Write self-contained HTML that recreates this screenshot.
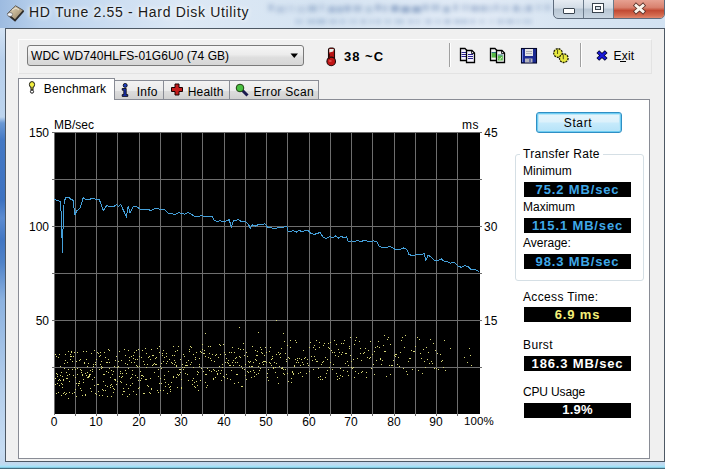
<!DOCTYPE html>
<html><head><meta charset="utf-8">
<style>
*{margin:0;padding:0;box-sizing:border-box}
html,body{width:720px;height:469px;overflow:hidden;background:#fff}
body{position:relative;font-family:"Liberation Sans",sans-serif;font-size:12px;color:#000}
.a{position:absolute}
.t{position:absolute;white-space:pre;line-height:1}
#frame{left:0;top:0;width:665px;height:469px;
 background:linear-gradient(180deg,#b4cde9 0px,#c9dcf0 20px,#d2e2f3 28px,#b8d0ec 60px,#bcd4ee 117px,#6a98d4 123px,#4378c4 140px,#3d72c1 200px,#5b8bd0 218px,#4176c3 240px,#4f82c8 262px,#8cb2e0 300px,#b5cfec 390px,#c6dcf2 450px,#c4d8ee 462px,#bcdcf1 465px,#a2e2f7 466.5px,#86c8e0 467.5px,#24404f 469px)}
#glass{left:0;top:0;width:665px;height:28px;
 background:linear-gradient(90deg,#9dbbe0 0px,#bad2ed 40px,#dce8f5 180px,#d6e4f2 320px,#e2ebf6 480px,#d8e5f2 560px,#d2e2f2 666px)}
#client{left:5px;top:28px;width:660px;height:434px;border:1px solid #4d5864;background:#f0f0f0}
#tb{left:18px;top:39px;width:634px;height:35px;border:1px solid #fdfdfd;border-right-color:#e3e3e3;border-bottom-color:#e3e3e3;background:#f0f0f0}
#combo{left:27px;top:45px;width:277px;height:21px;border:1px solid #7a7a7a;border-radius:3px;
 background:linear-gradient(180deg,#f6f6f6 0%,#ececec 45%,#dedede 60%,#d6d6d6 100%)}
.sep{width:2px;border-left:1px solid #a0a0a0;border-right:1px solid #fff}
.tab{top:80px;height:20px;border:1px solid #898c95;border-bottom:none;background:linear-gradient(180deg,#f2f2f2 0%,#ebebeb 50%,#dddddd 51%,#cfcfcf 100%)}
#page{left:18px;top:99px;width:632px;height:360px;border:1px solid #898c95;background:#fff}
.vb{left:524px;width:107px;height:15px;background:#000}
.vt{position:absolute;left:524px;width:107px;text-align:center;white-space:pre;line-height:1;font-weight:bold;font-size:13px;letter-spacing:0.85px}
.lbl{font-size:12px}
</style></head><body>
<div id="frame" class="a"></div>
<div id="glass" class="a"></div>
<svg class="a" style="left:0;top:0;filter:blur(2px)" width="665" height="28"><rect x="268" y="4" width="6" height="7" fill="#40649a" opacity="0.23"/><rect x="276" y="6" width="9" height="7" fill="#40649a" opacity="0.20"/><rect x="286" y="5" width="9" height="7" fill="#40649a" opacity="0.10"/><rect x="297" y="6" width="9" height="7" fill="#40649a" opacity="0.15"/><rect x="308" y="5" width="9" height="7" fill="#40649a" opacity="0.28"/><rect x="319" y="4" width="6" height="7" fill="#40649a" opacity="0.15"/><rect x="328" y="6" width="8" height="7" fill="#40649a" opacity="0.30"/><rect x="337" y="6" width="6" height="7" fill="#40649a" opacity="0.30"/><rect x="344" y="5" width="7" height="7" fill="#40649a" opacity="0.30"/><rect x="353" y="5" width="9" height="7" fill="#40649a" opacity="0.26"/><rect x="365" y="6" width="8" height="7" fill="#40649a" opacity="0.19"/><rect x="375" y="4" width="6" height="7" fill="#40649a" opacity="0.29"/><rect x="382" y="5" width="6" height="7" fill="#40649a" opacity="0.21"/><rect x="391" y="5" width="8" height="7" fill="#40649a" opacity="0.42"/><rect x="401" y="6" width="9" height="7" fill="#40649a" opacity="0.42"/><rect x="412" y="6" width="9" height="7" fill="#40649a" opacity="0.42"/><rect x="422" y="4" width="7" height="7" fill="#40649a" opacity="0.25"/><rect x="431" y="4" width="9" height="7" fill="#40649a" opacity="0.25"/><rect x="443" y="6" width="7" height="7" fill="#40649a" opacity="0.31"/><rect x="453" y="4" width="5" height="7" fill="#40649a" opacity="0.26"/><rect x="461" y="4" width="9" height="7" fill="#40649a" opacity="0.16"/><rect x="471" y="5" width="8" height="7" fill="#40649a" opacity="0.29"/><rect x="480" y="5" width="7" height="7" fill="#40649a" opacity="0.28"/><rect x="488" y="5" width="5" height="7" fill="#40649a" opacity="0.16"/><rect x="494" y="4" width="5" height="7" fill="#40649a" opacity="0.23"/><rect x="501" y="5" width="9" height="7" fill="#40649a" opacity="0.17"/><rect x="513" y="5" width="6" height="7" fill="#40649a" opacity="0.32"/><rect x="520" y="6" width="5" height="7" fill="#40649a" opacity="0.12"/><rect x="526" y="5" width="6" height="7" fill="#40649a" opacity="0.31"/><rect x="535" y="4" width="7" height="7" fill="#40649a" opacity="0.13"/><rect x="544" y="4" width="7" height="7" fill="#40649a" opacity="0.18"/><rect x="295" y="19" width="8" height="5" fill="#5074a8" opacity="0.19"/><rect x="307" y="19" width="9" height="5" fill="#5074a8" opacity="0.24"/><rect x="317" y="19" width="9" height="5" fill="#5074a8" opacity="0.29"/><rect x="329" y="19" width="8" height="5" fill="#5074a8" opacity="0.23"/><rect x="339" y="19" width="7" height="5" fill="#5074a8" opacity="0.19"/><rect x="349" y="19" width="9" height="5" fill="#5074a8" opacity="0.16"/><rect x="361" y="19" width="5" height="5" fill="#5074a8" opacity="0.26"/><rect x="369" y="19" width="5" height="5" fill="#5074a8" opacity="0.18"/><rect x="376" y="19" width="5" height="5" fill="#5074a8" opacity="0.23"/><rect x="384" y="19" width="8" height="5" fill="#5074a8" opacity="0.17"/><rect x="395" y="19" width="9" height="5" fill="#5074a8" opacity="0.24"/><rect x="408" y="19" width="5" height="5" fill="#5074a8" opacity="0.22"/><rect x="414" y="19" width="7" height="5" fill="#5074a8" opacity="0.15"/><rect x="425" y="19" width="7" height="5" fill="#5074a8" opacity="0.22"/><rect x="435" y="19" width="6" height="5" fill="#5074a8" opacity="0.17"/><rect x="444" y="19" width="7" height="5" fill="#5074a8" opacity="0.27"/><rect x="454" y="19" width="7" height="5" fill="#5074a8" opacity="0.26"/><rect x="462" y="19" width="5" height="5" fill="#5074a8" opacity="0.29"/><rect x="469" y="19" width="7" height="5" fill="#5074a8" opacity="0.20"/><rect x="479" y="19" width="6" height="5" fill="#5074a8" opacity="0.17"/><rect x="489" y="19" width="5" height="5" fill="#5074a8" opacity="0.12"/><rect x="497" y="19" width="7" height="5" fill="#5074a8" opacity="0.23"/><rect x="506" y="19" width="8" height="5" fill="#5074a8" opacity="0.26"/><rect x="516" y="19" width="5" height="5" fill="#5074a8" opacity="0.17"/><rect x="523" y="19" width="9" height="5" fill="#5074a8" opacity="0.19"/></svg>
<!-- window icon -->
<svg class="a" style="left:0;top:0" width="30" height="26" viewBox="0 0 30 26">
 <defs><linearGradient id="hd" x1="0" y1="0" x2="1" y2="1"><stop offset="0" stop-color="#e6dcc6"/><stop offset="0.5" stop-color="#bfae8e"/><stop offset="1" stop-color="#7d6f58"/></linearGradient></defs>
 <path d="M7.5,13.5 L15.5,5.8 L23.5,10.5 L15,20.5 Z" fill="url(#hd)" stroke="#4e4a44" stroke-width="0.9"/>
 <path d="M9,15.5 L15,20.5 L23.5,10.8" fill="none" stroke="#2e2c2a" stroke-width="1.8"/>
 <ellipse cx="10" cy="14.5" rx="2.6" ry="2" fill="#f0f2f6" stroke="#555" stroke-width="0.6"/>
 <path d="M12,10 L16,8 L19,10" fill="none" stroke="#f4eee0" stroke-width="1" opacity="0.8"/>
</svg>
<div class="t" style="left:29px;top:5.2px;font-size:14px;letter-spacing:0.68px;color:#1b1b1b;text-shadow:0 0 6px #fff,0 0 4px #fff">HD Tune 2.55 - Hard Disk Utility</div>
<!-- caption buttons -->
<div class="a" style="left:553px;top:-2px;width:112px;height:21px;border:1px solid #5d6b7c;border-radius:0 0 5px 5px;overflow:hidden;background:linear-gradient(180deg,#e9eef4 0%,#d3dce6 45%,#b8c6d4 55%,#c9d6e2 100%)">
 <div class="a" style="left:29px;top:0;width:1px;height:21px;background:#6b7a8a"></div>
 <div class="a" style="left:59px;top:0;width:51px;height:21px;border-left:1px solid #6b7a8a;background:linear-gradient(180deg,#e8a596 0%,#d9826f 40%,#c24a33 55%,#d66e52 80%,#e9a08a 100%)"></div>
</div>
<div class="a" style="left:563px;top:8px;width:12px;height:6px;background:#fff;border:1px solid #39434e;border-radius:1px"></div>
<div class="a" style="left:592px;top:3px;width:12px;height:10px;background:#fff;border:1px solid #39434e"></div>
<div class="a" style="left:595px;top:6px;width:6px;height:4px;background:#d8e0e8;border:1px solid #39434e"></div>
<svg class="a" style="left:631px;top:1px" width="17" height="15" viewBox="0 0 17 15">
 <path d="M3.4,3 L13.6,12 M13.6,3 L3.4,12" stroke="#5a3028" stroke-width="4.4"/>
 <path d="M4,3.6 L13,11.4 M13,3.6 L4,11.4" stroke="#fbf5ec" stroke-width="2.8"/>
</svg>

<div id="client" class="a"></div>
<div id="tb" class="a"></div>
<div id="combo" class="a"></div>
<div class="t" style="left:31px;top:49.7px;font-size:12px;letter-spacing:0.05px">WDC WD740HLFS-01G6U0 (74 GB)</div>
<svg class="a" style="left:290px;top:53px" width="9" height="6"><path d="M0.5,0.5 H8 L4.25,5 Z" fill="#000"/></svg>
<!-- thermometer -->
<svg class="a" style="left:320px;top:44px" width="22" height="24" viewBox="0 0 22 24">
 <path d="M8.5,15 V6 Q8.5,4 10.5,4 H12.5 Q14.5,4 14.5,6 V15 Z" fill="#b81414" stroke="#1e0a0a" stroke-width="1.1"/>
 <path d="M9.3,5 H13.8 L13.2,7.5 L9.3,8.5 Z" fill="#e8eee8"/>
 <circle cx="11.2" cy="17.4" r="4.3" fill="#c01616" stroke="#1e0a0a" stroke-width="1.1"/>
 <path d="M9.5,10 V15" stroke="#5a0606" stroke-width="1"/>
 <ellipse cx="10.2" cy="17" rx="1.6" ry="1.1" fill="#f06060" opacity="0.7"/>
</svg>
<div class="t" style="left:344px;top:49.8px;font-size:13px;font-weight:bold;letter-spacing:1px">38 ~C</div>
<div class="a sep" style="left:449px;top:43px;height:24px"></div>
<!-- copy icon -->
<svg class="a" style="left:458px;top:46px" width="20" height="19" viewBox="0 0 20 19">
 <path d="M2.5,2.5 H7 L9.5,5 V14.5 H2.5 Z" fill="#f4f2fb" stroke="#000" stroke-width="1.3"/>
 <path d="M3.5,6.5 H8 M3.5,8.5 H8 M3.5,10.5 H8" stroke="#2b2290" stroke-width="1"/>
 <path d="M8.5,4.5 H14 L16.5,7 V16.5 H8.5 Z" fill="#f4f2fb" stroke="#000" stroke-width="1.3"/>
 <path d="M13.5,4.5 V7.5 H16.5" fill="none" stroke="#000" stroke-width="0.8"/>
 <path d="M10,8.5 H15 M10,10.5 H15 M10,12.5 H15" stroke="#2b2290" stroke-width="1"/>
</svg>
<svg class="a" style="left:488px;top:46px" width="20" height="19" viewBox="0 0 20 19">
 <path d="M2.5,2.5 H7 L9.5,5 V14.5 H2.5 Z" fill="#f4f4f4" stroke="#000" stroke-width="1.3"/>
 <rect x="3.6" y="7" width="4.6" height="4.6" fill="#58b848"/>
 <path d="M3.6,6.5 H8.2" stroke="#2a7080"/>
 <path d="M8.5,4.5 H14 L16.5,7 V16.5 H8.5 Z" fill="#f4f4f4" stroke="#000" stroke-width="1.3"/>
 <path d="M13.5,4.5 V7.5 H16.5" fill="none" stroke="#000" stroke-width="0.8"/>
 <rect x="9.8" y="9.5" width="5" height="5" fill="#58b848"/>
 <path d="M9.8,9 H14.8" stroke="#2a7080"/>
 <path d="M11,12.5 L12,13.5 L13.8,11" fill="none" stroke="#e8ffe0" stroke-width="0.8"/>
</svg>
<!-- floppy -->
<svg class="a" style="left:520px;top:47px" width="18" height="17" viewBox="0 0 18 17">
 <rect x="1.5" y="1.5" width="15" height="14.5" fill="#1c2a92" stroke="#05082a" stroke-width="1.1"/>
 <path d="M2.5,2.5 V15" stroke="#6a80e0" stroke-width="1"/>
 <rect x="5" y="2" width="8" height="7" fill="#e4e4e4"/>
 <path d="M6,4.5 H12 M6,6.5 H12" stroke="#a0a0a8" stroke-width="0.8"/>
 <rect x="5" y="11.5" width="7.5" height="4" fill="#b4b4bc"/>
 <rect x="9.5" y="12" width="1" height="3" fill="#1c2a92"/>
</svg>
<!-- coins / gears -->
<svg class="a" style="left:552px;top:47px" width="18" height="17" viewBox="0 0 18 17">
 <circle cx="6" cy="6" r="4.3" fill="#e8ea40" stroke="#1e1e06" stroke-width="1.3" stroke-dasharray="2 0.9"/>
 <path d="M5.5,2.5 V7" stroke="#5a5a18" stroke-width="1.1"/>
 <circle cx="11.8" cy="11.2" r="4.3" fill="#e8ea40" stroke="#1e1e06" stroke-width="1.3" stroke-dasharray="2 0.9"/>
 <path d="M11.3,7.7 V12.2" stroke="#5a5a18" stroke-width="1.1"/>
</svg>
<div class="a sep" style="left:580px;top:43px;height:24px"></div>
<svg class="a" style="left:594px;top:48px" width="16" height="15" viewBox="0 0 16 15">
 <path d="M3.8,3.6 L12.2,11.4 M12.2,3.6 L3.8,11.4" stroke="#00002a" stroke-width="4"/>
 <path d="M4.3,4.1 L11.7,10.9 M11.7,4.1 L4.3,10.9" stroke="#1a1ad8" stroke-width="2.4"/>
</svg>
<div class="t" style="left:613.5px;top:49.6px;font-size:12px;letter-spacing:0.2px">Exit</div>
<div class="a" style="left:620px;top:61px;width:6px;height:1px;background:#000"></div>

<!-- tabs -->
<div class="a tab" style="left:114px;width:50px"></div>
<div class="a tab" style="left:163px;width:67px"></div>
<div class="a tab" style="left:229px;width:90px"></div>
<div id="page" class="a"></div>
<div class="a" style="left:18px;top:78px;width:97px;height:22px;border:1px solid #898c95;border-bottom:none;background:#fff"></div>
<!-- bulb -->
<svg class="a" style="left:28px;top:81px" width="8" height="13" viewBox="0 0 8 13">
 <ellipse cx="4" cy="3.6" rx="2.6" ry="3" fill="#f4f040" stroke="#1a1a1a" stroke-width="1"/>
 <path d="M3,6 V9 H5 V6" fill="#e0dc30" stroke="#1a1a1a" stroke-width="1"/>
 <circle cx="4" cy="10.6" r="1.6" fill="#fff" stroke="#1a1a1a" stroke-width="1"/>
</svg>
<div class="t" style="left:43.8px;top:83.4px;font-size:12px;letter-spacing:0.2px">Benchmark</div>
<!-- info icon -->
<svg class="a" style="left:121px;top:83px" width="8" height="14" viewBox="0 0 8 14">
 <circle cx="4.2" cy="2.4" r="2" fill="#2040c0" stroke="#000" stroke-width="0.8"/>
 <path d="M1.2,5.5 H5.2 V11.6 H6.8 V13.4 H1.2 V11.6 H2.8 V7.2 H1.2 Z" fill="#1a30b0" stroke="#000" stroke-width="0.8"/>
</svg>
<div class="t" style="left:136.8px;top:85.5px;font-size:12px;letter-spacing:0.2px">Info</div>
<!-- health cross -->
<svg class="a" style="left:170px;top:83px" width="14" height="13" viewBox="0 0 14 13">
 <path d="M5,1 H9 V4.5 H12.5 V8.5 H9 V12 H5 V8.5 H1.5 V4.5 H5 Z" fill="#c41c1c" stroke="#1a0000" stroke-width="1"/>
</svg>
<div class="t" style="left:187.7px;top:85.5px;font-size:12px;letter-spacing:0.2px">Health</div>
<!-- magnifier -->
<svg class="a" style="left:235px;top:82.5px" width="15" height="14" viewBox="0 0 15 14">
 <path d="M6.5,6.5 L12.5,12.5" stroke="#1a1a50" stroke-width="3"/>
 <circle cx="5" cy="5" r="3.8" fill="#48c040" stroke="#204010" stroke-width="1"/>
</svg>
<div class="t" style="left:253.5px;top:85.5px;font-size:12px;letter-spacing:0.3px">Error Scan</div>

<!-- chart -->
<svg class="a" style="left:0;top:0" width="720" height="469">
 <rect x="54" y="132" width="426" height="282" fill="#000"/>
 <g shape-rendering="crispEdges">
 <path d="M75.5,132V416 M96.5,132V416 M117.5,132V416 M139.5,132V416 M160.5,132V416 M181.5,132V416 M202.5,132V416 M224.5,132V416 M245.5,132V416 M266.5,132V416 M287.5,132V416 M309.5,132V416 M330.5,132V416 M351.5,132V416 M372.5,132V416 M394.5,132V416 M415.5,132V416 M436.5,132V416 M457.5,132V416 M52,367.5H482 M52,320.5H482 M52,273.5H482 M52,226.5H482 M52,179.5H482" stroke="#6e6e6e" stroke-width="1" fill="none"/>
 <path d="M52,132.5 H481.5 M54.5,132 V415 M52,226.5 H54 M52,320.5 H54" stroke="#6e6e6e" stroke-width="1" fill="none"/>
 <g fill="#d8d878"><rect x="55" y="384" width="1" height="1"/><rect x="55" y="378" width="1" height="1"/><rect x="55" y="354" width="1" height="1"/><rect x="56" y="373" width="1" height="1"/><rect x="56" y="356" width="1" height="1"/><rect x="56" y="393" width="1" height="1"/><rect x="57" y="383" width="1" height="1"/><rect x="57" y="376" width="1" height="1"/><rect x="57" y="374" width="1" height="1"/><rect x="58" y="357" width="1" height="1"/><rect x="58" y="392" width="1" height="1"/><rect x="58" y="380" width="1" height="1"/><rect x="59" y="379" width="1" height="1"/><rect x="59" y="354" width="1" height="1"/><rect x="59" y="385" width="1" height="1"/><rect x="60" y="380" width="1" height="1"/><rect x="60" y="366" width="1" height="1"/><rect x="60" y="375" width="1" height="1"/><rect x="61" y="395" width="1" height="1"/><rect x="61" y="383" width="1" height="1"/><rect x="61" y="372" width="1" height="1"/><rect x="62" y="376" width="1" height="1"/><rect x="62" y="384" width="1" height="1"/><rect x="62" y="387" width="1" height="1"/><rect x="63" y="380" width="1" height="1"/><rect x="63" y="393" width="1" height="1"/><rect x="63" y="379" width="1" height="1"/><rect x="64" y="392" width="1" height="1"/><rect x="64" y="368" width="1" height="1"/><rect x="64" y="363" width="1" height="1"/><rect x="65" y="354" width="1" height="1"/><rect x="65" y="360" width="1" height="1"/><rect x="65" y="394" width="1" height="1"/><rect x="66" y="378" width="1" height="1"/><rect x="66" y="393" width="1" height="1"/><rect x="66" y="372" width="1" height="1"/><rect x="67" y="378" width="1" height="1"/><rect x="67" y="362" width="1" height="1"/><rect x="67" y="375" width="1" height="1"/><rect x="68" y="351" width="1" height="1"/><rect x="68" y="369" width="1" height="1"/><rect x="68" y="398" width="1" height="1"/><rect x="69" y="381" width="1" height="1"/><rect x="69" y="374" width="1" height="1"/><rect x="69" y="392" width="1" height="1"/><rect x="70" y="356" width="1" height="1"/><rect x="70" y="354" width="1" height="1"/><rect x="70" y="359" width="1" height="1"/><rect x="71" y="351" width="1" height="1"/><rect x="71" y="356" width="1" height="1"/><rect x="71" y="352" width="1" height="1"/><rect x="72" y="361" width="1" height="1"/><rect x="72" y="369" width="1" height="1"/><rect x="72" y="393" width="1" height="1"/><rect x="73" y="375" width="1" height="1"/><rect x="73" y="356" width="1" height="1"/><rect x="74" y="392" width="1" height="1"/><rect x="74" y="352" width="1" height="1"/><rect x="74" y="367" width="1" height="1"/><rect x="75" y="377" width="1" height="1"/><rect x="75" y="389" width="1" height="1"/><rect x="75" y="369" width="1" height="1"/><rect x="76" y="383" width="1" height="1"/><rect x="76" y="361" width="1" height="1"/><rect x="76" y="396" width="1" height="1"/><rect x="77" y="374" width="1" height="1"/><rect x="77" y="368" width="1" height="1"/><rect x="77" y="352" width="1" height="1"/><rect x="78" y="385" width="1" height="1"/><rect x="78" y="385" width="1" height="1"/><rect x="78" y="383" width="1" height="1"/><rect x="79" y="360" width="1" height="1"/><rect x="79" y="381" width="1" height="1"/><rect x="79" y="383" width="1" height="1"/><rect x="80" y="369" width="1" height="1"/><rect x="80" y="388" width="1" height="1"/><rect x="80" y="359" width="1" height="1"/><rect x="81" y="390" width="1" height="1"/><rect x="81" y="370" width="1" height="1"/><rect x="81" y="372" width="1" height="1"/><rect x="82" y="395" width="1" height="1"/><rect x="82" y="374" width="1" height="1"/><rect x="82" y="375" width="1" height="1"/><rect x="83" y="351" width="1" height="1"/><rect x="83" y="379" width="1" height="1"/><rect x="83" y="382" width="1" height="1"/><rect x="84" y="362" width="1" height="1"/><rect x="84" y="362" width="1" height="1"/><rect x="84" y="363" width="1" height="1"/><rect x="85" y="395" width="1" height="1"/><rect x="85" y="373" width="1" height="1"/><rect x="85" y="394" width="1" height="1"/><rect x="86" y="375" width="1" height="1"/><rect x="86" y="351" width="1" height="1"/><rect x="86" y="359" width="1" height="1"/><rect x="87" y="366" width="1" height="1"/><rect x="87" y="372" width="1" height="1"/><rect x="87" y="377" width="1" height="1"/><rect x="88" y="377" width="1" height="1"/><rect x="88" y="363" width="1" height="1"/><rect x="88" y="376" width="1" height="1"/><rect x="89" y="376" width="1" height="1"/><rect x="89" y="375" width="1" height="1"/><rect x="89" y="374" width="1" height="1"/><rect x="90" y="388" width="1" height="1"/><rect x="90" y="370" width="1" height="1"/><rect x="90" y="374" width="1" height="1"/><rect x="91" y="353" width="1" height="1"/><rect x="91" y="353" width="1" height="1"/><rect x="91" y="391" width="1" height="1"/><rect x="92" y="369" width="1" height="1"/><rect x="92" y="379" width="1" height="1"/><rect x="92" y="371" width="1" height="1"/><rect x="93" y="364" width="1" height="1"/><rect x="93" y="366" width="1" height="1"/><rect x="94" y="385" width="1" height="1"/><rect x="94" y="377" width="1" height="1"/><rect x="94" y="350" width="1" height="1"/><rect x="95" y="364" width="1" height="1"/><rect x="95" y="393" width="1" height="1"/><rect x="95" y="362" width="1" height="1"/><rect x="96" y="359" width="1" height="1"/><rect x="96" y="394" width="1" height="1"/><rect x="96" y="359" width="1" height="1"/><rect x="97" y="384" width="1" height="1"/><rect x="97" y="352" width="1" height="1"/><rect x="98" y="353" width="1" height="1"/><rect x="98" y="384" width="1" height="1"/><rect x="98" y="391" width="1" height="1"/><rect x="99" y="369" width="1" height="1"/><rect x="99" y="395" width="1" height="1"/><rect x="99" y="356" width="1" height="1"/><rect x="100" y="355" width="1" height="1"/><rect x="100" y="352" width="1" height="1"/><rect x="100" y="364" width="1" height="1"/><rect x="101" y="368" width="1" height="1"/><rect x="101" y="366" width="1" height="1"/><rect x="101" y="361" width="1" height="1"/><rect x="102" y="367" width="1" height="1"/><rect x="102" y="395" width="1" height="1"/><rect x="102" y="389" width="1" height="1"/><rect x="103" y="390" width="1" height="1"/><rect x="103" y="374" width="1" height="1"/><rect x="103" y="381" width="1" height="1"/><rect x="104" y="374" width="1" height="1"/><rect x="104" y="352" width="1" height="1"/><rect x="105" y="385" width="1" height="1"/><rect x="105" y="357" width="1" height="1"/><rect x="105" y="390" width="1" height="1"/><rect x="106" y="362" width="1" height="1"/><rect x="106" y="371" width="1" height="1"/><rect x="107" y="362" width="1" height="1"/><rect x="107" y="386" width="1" height="1"/><rect x="107" y="396" width="1" height="1"/><rect x="108" y="349" width="1" height="1"/><rect x="108" y="372" width="1" height="1"/><rect x="108" y="359" width="1" height="1"/><rect x="109" y="362" width="1" height="1"/><rect x="109" y="368" width="1" height="1"/><rect x="109" y="350" width="1" height="1"/><rect x="110" y="377" width="1" height="1"/><rect x="110" y="385" width="1" height="1"/><rect x="110" y="387" width="1" height="1"/><rect x="111" y="396" width="1" height="1"/><rect x="111" y="384" width="1" height="1"/><rect x="111" y="370" width="1" height="1"/><rect x="112" y="386" width="1" height="1"/><rect x="112" y="374" width="1" height="1"/><rect x="113" y="388" width="1" height="1"/><rect x="113" y="392" width="1" height="1"/><rect x="113" y="371" width="1" height="1"/><rect x="114" y="366" width="1" height="1"/><rect x="114" y="389" width="1" height="1"/><rect x="114" y="379" width="1" height="1"/><rect x="115" y="360" width="1" height="1"/><rect x="115" y="379" width="1" height="1"/><rect x="115" y="380" width="1" height="1"/><rect x="116" y="356" width="1" height="1"/><rect x="116" y="384" width="1" height="1"/><rect x="116" y="384" width="1" height="1"/><rect x="117" y="367" width="1" height="1"/><rect x="117" y="381" width="1" height="1"/><rect x="118" y="366" width="1" height="1"/><rect x="118" y="361" width="1" height="1"/><rect x="119" y="376" width="1" height="1"/><rect x="119" y="351" width="1" height="1"/><rect x="120" y="381" width="1" height="1"/><rect x="120" y="373" width="1" height="1"/><rect x="120" y="371" width="1" height="1"/><rect x="121" y="377" width="1" height="1"/><rect x="121" y="360" width="1" height="1"/><rect x="121" y="382" width="1" height="1"/><rect x="122" y="394" width="1" height="1"/><rect x="122" y="376" width="1" height="1"/><rect x="122" y="373" width="1" height="1"/><rect x="123" y="388" width="1" height="1"/><rect x="123" y="391" width="1" height="1"/><rect x="124" y="391" width="1" height="1"/><rect x="124" y="349" width="1" height="1"/><rect x="125" y="370" width="1" height="1"/><rect x="125" y="355" width="1" height="1"/><rect x="125" y="363" width="1" height="1"/><rect x="126" y="384" width="1" height="1"/><rect x="126" y="373" width="1" height="1"/><rect x="127" y="364" width="1" height="1"/><rect x="127" y="396" width="1" height="1"/><rect x="128" y="368" width="1" height="1"/><rect x="128" y="350" width="1" height="1"/><rect x="128" y="388" width="1" height="1"/><rect x="129" y="360" width="1" height="1"/><rect x="129" y="357" width="1" height="1"/><rect x="129" y="394" width="1" height="1"/><rect x="130" y="385" width="1" height="1"/><rect x="130" y="378" width="1" height="1"/><rect x="131" y="377" width="1" height="1"/><rect x="131" y="356" width="1" height="1"/><rect x="131" y="362" width="1" height="1"/><rect x="132" y="383" width="1" height="1"/><rect x="132" y="370" width="1" height="1"/><rect x="132" y="374" width="1" height="1"/><rect x="133" y="355" width="1" height="1"/><rect x="133" y="391" width="1" height="1"/><rect x="133" y="358" width="1" height="1"/><rect x="134" y="362" width="1" height="1"/><rect x="134" y="352" width="1" height="1"/><rect x="135" y="359" width="1" height="1"/><rect x="135" y="375" width="1" height="1"/><rect x="135" y="375" width="1" height="1"/><rect x="136" y="365" width="1" height="1"/><rect x="136" y="350" width="1" height="1"/><rect x="136" y="394" width="1" height="1"/><rect x="137" y="377" width="1" height="1"/><rect x="137" y="359" width="1" height="1"/><rect x="137" y="366" width="1" height="1"/><rect x="138" y="388" width="1" height="1"/><rect x="138" y="349" width="1" height="1"/><rect x="138" y="380" width="1" height="1"/><rect x="139" y="366" width="1" height="1"/><rect x="139" y="387" width="1" height="1"/><rect x="139" y="356" width="1" height="1"/><rect x="140" y="380" width="1" height="1"/><rect x="140" y="380" width="1" height="1"/><rect x="140" y="371" width="1" height="1"/><rect x="141" y="375" width="1" height="1"/><rect x="141" y="357" width="1" height="1"/><rect x="141" y="378" width="1" height="1"/><rect x="142" y="350" width="1" height="1"/><rect x="142" y="375" width="1" height="1"/><rect x="143" y="376" width="1" height="1"/><rect x="143" y="361" width="1" height="1"/><rect x="143" y="393" width="1" height="1"/><rect x="144" y="364" width="1" height="1"/><rect x="144" y="393" width="1" height="1"/><rect x="145" y="348" width="1" height="1"/><rect x="145" y="379" width="1" height="1"/><rect x="146" y="379" width="1" height="1"/><rect x="146" y="353" width="1" height="1"/><rect x="146" y="367" width="1" height="1"/><rect x="147" y="385" width="1" height="1"/><rect x="147" y="364" width="1" height="1"/><rect x="148" y="386" width="1" height="1"/><rect x="148" y="357" width="1" height="1"/><rect x="149" y="392" width="1" height="1"/><rect x="149" y="356" width="1" height="1"/><rect x="150" y="378" width="1" height="1"/><rect x="150" y="359" width="1" height="1"/><rect x="150" y="393" width="1" height="1"/><rect x="151" y="349" width="1" height="1"/><rect x="151" y="389" width="1" height="1"/><rect x="151" y="388" width="1" height="1"/><rect x="152" y="355" width="1" height="1"/><rect x="152" y="365" width="1" height="1"/><rect x="153" y="364" width="1" height="1"/><rect x="153" y="355" width="1" height="1"/><rect x="154" y="363" width="1" height="1"/><rect x="154" y="372" width="1" height="1"/><rect x="154" y="363" width="1" height="1"/><rect x="155" y="358" width="1" height="1"/><rect x="155" y="364" width="1" height="1"/><rect x="156" y="364" width="1" height="1"/><rect x="156" y="357" width="1" height="1"/><rect x="157" y="348" width="1" height="1"/><rect x="157" y="390" width="1" height="1"/><rect x="158" y="376" width="1" height="1"/><rect x="158" y="392" width="1" height="1"/><rect x="158" y="369" width="1" height="1"/><rect x="159" y="346" width="1" height="1"/><rect x="159" y="383" width="1" height="1"/><rect x="159" y="352" width="1" height="1"/><rect x="160" y="378" width="1" height="1"/><rect x="160" y="366" width="1" height="1"/><rect x="160" y="390" width="1" height="1"/><rect x="161" y="383" width="1" height="1"/><rect x="161" y="368" width="1" height="1"/><rect x="161" y="363" width="1" height="1"/><rect x="162" y="355" width="1" height="1"/><rect x="162" y="353" width="1" height="1"/><rect x="163" y="361" width="1" height="1"/><rect x="163" y="390" width="1" height="1"/><rect x="163" y="350" width="1" height="1"/><rect x="164" y="379" width="1" height="1"/><rect x="164" y="357" width="1" height="1"/><rect x="164" y="375" width="1" height="1"/><rect x="165" y="382" width="1" height="1"/><rect x="165" y="386" width="1" height="1"/><rect x="166" y="363" width="1" height="1"/><rect x="166" y="356" width="1" height="1"/><rect x="166" y="353" width="1" height="1"/><rect x="167" y="361" width="1" height="1"/><rect x="167" y="393" width="1" height="1"/><rect x="168" y="384" width="1" height="1"/><rect x="168" y="371" width="1" height="1"/><rect x="169" y="387" width="1" height="1"/><rect x="169" y="359" width="1" height="1"/><rect x="170" y="391" width="1" height="1"/><rect x="170" y="389" width="1" height="1"/><rect x="170" y="386" width="1" height="1"/><rect x="171" y="382" width="1" height="1"/><rect x="171" y="362" width="1" height="1"/><rect x="172" y="363" width="1" height="1"/><rect x="172" y="355" width="1" height="1"/><rect x="173" y="376" width="1" height="1"/><rect x="173" y="346" width="1" height="1"/><rect x="173" y="377" width="1" height="1"/><rect x="174" y="355" width="1" height="1"/><rect x="174" y="360" width="1" height="1"/><rect x="174" y="364" width="1" height="1"/><rect x="175" y="351" width="1" height="1"/><rect x="175" y="362" width="1" height="1"/><rect x="176" y="366" width="1" height="1"/><rect x="176" y="365" width="1" height="1"/><rect x="176" y="377" width="1" height="1"/><rect x="177" y="350" width="1" height="1"/><rect x="177" y="374" width="1" height="1"/><rect x="177" y="387" width="1" height="1"/><rect x="178" y="346" width="1" height="1"/><rect x="178" y="375" width="1" height="1"/><rect x="179" y="374" width="1" height="1"/><rect x="179" y="369" width="1" height="1"/><rect x="180" y="369" width="1" height="1"/><rect x="180" y="359" width="1" height="1"/><rect x="180" y="372" width="1" height="1"/><rect x="181" y="379" width="1" height="1"/><rect x="181" y="388" width="1" height="1"/><rect x="181" y="387" width="1" height="1"/><rect x="182" y="367" width="1" height="1"/><rect x="182" y="364" width="1" height="1"/><rect x="183" y="354" width="1" height="1"/><rect x="183" y="369" width="1" height="1"/><rect x="184" y="356" width="1" height="1"/><rect x="184" y="367" width="1" height="1"/><rect x="185" y="365" width="1" height="1"/><rect x="185" y="373" width="1" height="1"/><rect x="186" y="362" width="1" height="1"/><rect x="186" y="365" width="1" height="1"/><rect x="187" y="365" width="1" height="1"/><rect x="187" y="374" width="1" height="1"/><rect x="188" y="380" width="1" height="1"/><rect x="188" y="360" width="1" height="1"/><rect x="189" y="351" width="1" height="1"/><rect x="189" y="349" width="1" height="1"/><rect x="190" y="346" width="1" height="1"/><rect x="190" y="364" width="1" height="1"/><rect x="191" y="347" width="1" height="1"/><rect x="191" y="362" width="1" height="1"/><rect x="192" y="384" width="1" height="1"/><rect x="192" y="380" width="1" height="1"/><rect x="193" y="378" width="1" height="1"/><rect x="193" y="367" width="1" height="1"/><rect x="193" y="354" width="1" height="1"/><rect x="194" y="386" width="1" height="1"/><rect x="194" y="382" width="1" height="1"/><rect x="195" y="387" width="1" height="1"/><rect x="195" y="357" width="1" height="1"/><rect x="195" y="359" width="1" height="1"/><rect x="196" y="352" width="1" height="1"/><rect x="196" y="381" width="1" height="1"/><rect x="196" y="381" width="1" height="1"/><rect x="197" y="374" width="1" height="1"/><rect x="197" y="385" width="1" height="1"/><rect x="197" y="371" width="1" height="1"/><rect x="198" y="390" width="1" height="1"/><rect x="198" y="372" width="1" height="1"/><rect x="199" y="366" width="1" height="1"/><rect x="199" y="358" width="1" height="1"/><rect x="199" y="364" width="1" height="1"/><rect x="200" y="380" width="1" height="1"/><rect x="200" y="351" width="1" height="1"/><rect x="200" y="351" width="1" height="1"/><rect x="201" y="368" width="1" height="1"/><rect x="201" y="352" width="1" height="1"/><rect x="202" y="344" width="1" height="1"/><rect x="202" y="349" width="1" height="1"/><rect x="203" y="371" width="1" height="1"/><rect x="203" y="353" width="1" height="1"/><rect x="204" y="350" width="1" height="1"/><rect x="204" y="353" width="1" height="1"/><rect x="205" y="382" width="1" height="1"/><rect x="205" y="356" width="1" height="1"/><rect x="205" y="374" width="1" height="1"/><rect x="206" y="374" width="1" height="1"/><rect x="206" y="387" width="1" height="1"/><rect x="207" y="385" width="1" height="1"/><rect x="207" y="368" width="1" height="1"/><rect x="208" y="346" width="1" height="1"/><rect x="208" y="357" width="1" height="1"/><rect x="209" y="353" width="1" height="1"/><rect x="209" y="370" width="1" height="1"/><rect x="210" y="358" width="1" height="1"/><rect x="210" y="346" width="1" height="1"/><rect x="211" y="360" width="1" height="1"/><rect x="211" y="371" width="1" height="1"/><rect x="212" y="354" width="1" height="1"/><rect x="212" y="354" width="1" height="1"/><rect x="213" y="378" width="1" height="1"/><rect x="213" y="379" width="1" height="1"/><rect x="213" y="369" width="1" height="1"/><rect x="214" y="361" width="1" height="1"/><rect x="214" y="370" width="1" height="1"/><rect x="215" y="355" width="1" height="1"/><rect x="215" y="377" width="1" height="1"/><rect x="216" y="371" width="1" height="1"/><rect x="216" y="354" width="1" height="1"/><rect x="217" y="374" width="1" height="1"/><rect x="217" y="373" width="1" height="1"/><rect x="218" y="370" width="1" height="1"/><rect x="218" y="357" width="1" height="1"/><rect x="219" y="366" width="1" height="1"/><rect x="219" y="344" width="1" height="1"/><rect x="220" y="354" width="1" height="1"/><rect x="220" y="345" width="1" height="1"/><rect x="220" y="373" width="1" height="1"/><rect x="221" y="370" width="1" height="1"/><rect x="221" y="380" width="1" height="1"/><rect x="222" y="364" width="1" height="1"/><rect x="222" y="367" width="1" height="1"/><rect x="223" y="344" width="1" height="1"/><rect x="223" y="376" width="1" height="1"/><rect x="224" y="352" width="1" height="1"/><rect x="224" y="377" width="1" height="1"/><rect x="225" y="362" width="1" height="1"/><rect x="225" y="354" width="1" height="1"/><rect x="226" y="358" width="1" height="1"/><rect x="226" y="374" width="1" height="1"/><rect x="227" y="362" width="1" height="1"/><rect x="227" y="378" width="1" height="1"/><rect x="228" y="360" width="1" height="1"/><rect x="228" y="363" width="1" height="1"/><rect x="229" y="352" width="1" height="1"/><rect x="229" y="365" width="1" height="1"/><rect x="230" y="379" width="1" height="1"/><rect x="230" y="365" width="1" height="1"/><rect x="231" y="370" width="1" height="1"/><rect x="231" y="352" width="1" height="1"/><rect x="232" y="347" width="1" height="1"/><rect x="232" y="362" width="1" height="1"/><rect x="233" y="365" width="1" height="1"/><rect x="233" y="360" width="1" height="1"/><rect x="234" y="383" width="1" height="1"/><rect x="234" y="352" width="1" height="1"/><rect x="235" y="362" width="1" height="1"/><rect x="235" y="358" width="1" height="1"/><rect x="236" y="374" width="1" height="1"/><rect x="236" y="357" width="1" height="1"/><rect x="237" y="374" width="1" height="1"/><rect x="237" y="362" width="1" height="1"/><rect x="238" y="348" width="1" height="1"/><rect x="238" y="382" width="1" height="1"/><rect x="239" y="356" width="1" height="1"/><rect x="239" y="365" width="1" height="1"/><rect x="240" y="357" width="1" height="1"/><rect x="240" y="349" width="1" height="1"/><rect x="241" y="386" width="1" height="1"/><rect x="241" y="366" width="1" height="1"/><rect x="242" y="386" width="1" height="1"/><rect x="242" y="368" width="1" height="1"/><rect x="243" y="349" width="1" height="1"/><rect x="243" y="343" width="1" height="1"/><rect x="244" y="369" width="1" height="1"/><rect x="244" y="355" width="1" height="1"/><rect x="245" y="375" width="1" height="1"/><rect x="245" y="364" width="1" height="1"/><rect x="246" y="352" width="1" height="1"/><rect x="246" y="379" width="1" height="1"/><rect x="247" y="371" width="1" height="1"/><rect x="247" y="356" width="1" height="1"/><rect x="248" y="361" width="1" height="1"/><rect x="248" y="372" width="1" height="1"/><rect x="249" y="362" width="1" height="1"/><rect x="249" y="366" width="1" height="1"/><rect x="250" y="371" width="1" height="1"/><rect x="250" y="361" width="1" height="1"/><rect x="251" y="366" width="1" height="1"/><rect x="251" y="377" width="1" height="1"/><rect x="252" y="346" width="1" height="1"/><rect x="252" y="366" width="1" height="1"/><rect x="253" y="370" width="1" height="1"/><rect x="253" y="362" width="1" height="1"/><rect x="254" y="372" width="1" height="1"/><rect x="254" y="376" width="1" height="1"/><rect x="255" y="350" width="1" height="1"/><rect x="255" y="359" width="1" height="1"/><rect x="256" y="360" width="1" height="1"/><rect x="256" y="355" width="1" height="1"/><rect x="256" y="374" width="1" height="1"/><rect x="257" y="351" width="1" height="1"/><rect x="257" y="355" width="1" height="1"/><rect x="258" y="373" width="1" height="1"/><rect x="258" y="366" width="1" height="1"/><rect x="259" y="363" width="1" height="1"/><rect x="259" y="370" width="1" height="1"/><rect x="260" y="347" width="1" height="1"/><rect x="260" y="368" width="1" height="1"/><rect x="261" y="352" width="1" height="1"/><rect x="261" y="349" width="1" height="1"/><rect x="262" y="353" width="1" height="1"/><rect x="262" y="362" width="1" height="1"/><rect x="263" y="364" width="1" height="1"/><rect x="263" y="361" width="1" height="1"/><rect x="264" y="361" width="1" height="1"/><rect x="264" y="355" width="1" height="1"/><rect x="265" y="361" width="1" height="1"/><rect x="265" y="347" width="1" height="1"/><rect x="266" y="352" width="1" height="1"/><rect x="266" y="362" width="1" height="1"/><rect x="267" y="373" width="1" height="1"/><rect x="267" y="377" width="1" height="1"/><rect x="268" y="369" width="1" height="1"/><rect x="268" y="380" width="1" height="1"/><rect x="269" y="351" width="1" height="1"/><rect x="269" y="362" width="1" height="1"/><rect x="270" y="347" width="1" height="1"/><rect x="270" y="363" width="1" height="1"/><rect x="271" y="359" width="1" height="1"/><rect x="271" y="365" width="1" height="1"/><rect x="272" y="358" width="1" height="1"/><rect x="272" y="356" width="1" height="1"/><rect x="273" y="367" width="1" height="1"/><rect x="273" y="368" width="1" height="1"/><rect x="274" y="362" width="1" height="1"/><rect x="275" y="372" width="1" height="1"/><rect x="275" y="367" width="1" height="1"/><rect x="276" y="363" width="1" height="1"/><rect x="276" y="354" width="1" height="1"/><rect x="277" y="377" width="1" height="1"/><rect x="277" y="377" width="1" height="1"/><rect x="278" y="352" width="1" height="1"/><rect x="278" y="383" width="1" height="1"/><rect x="279" y="354" width="1" height="1"/><rect x="279" y="366" width="1" height="1"/><rect x="280" y="357" width="1" height="1"/><rect x="280" y="353" width="1" height="1"/><rect x="281" y="348" width="1" height="1"/><rect x="281" y="368" width="1" height="1"/><rect x="282" y="367" width="1" height="1"/><rect x="282" y="368" width="1" height="1"/><rect x="283" y="369" width="1" height="1"/><rect x="283" y="373" width="1" height="1"/><rect x="284" y="341" width="1" height="1"/><rect x="284" y="374" width="1" height="1"/><rect x="285" y="369" width="1" height="1"/><rect x="285" y="353" width="1" height="1"/><rect x="286" y="359" width="1" height="1"/><rect x="286" y="361" width="1" height="1"/><rect x="287" y="345" width="1" height="1"/><rect x="287" y="373" width="1" height="1"/><rect x="288" y="357" width="1" height="1"/><rect x="288" y="381" width="1" height="1"/><rect x="289" y="358" width="1" height="1"/><rect x="290" y="347" width="1" height="1"/><rect x="290" y="340" width="1" height="1"/><rect x="291" y="382" width="1" height="1"/><rect x="291" y="378" width="1" height="1"/><rect x="292" y="371" width="1" height="1"/><rect x="292" y="372" width="1" height="1"/><rect x="293" y="373" width="1" height="1"/><rect x="293" y="374" width="1" height="1"/><rect x="294" y="365" width="1" height="1"/><rect x="294" y="366" width="1" height="1"/><rect x="295" y="340" width="1" height="1"/><rect x="295" y="359" width="1" height="1"/><rect x="296" y="362" width="1" height="1"/><rect x="296" y="342" width="1" height="1"/><rect x="297" y="358" width="1" height="1"/><rect x="297" y="360" width="1" height="1"/><rect x="298" y="362" width="1" height="1"/><rect x="298" y="373" width="1" height="1"/><rect x="299" y="358" width="1" height="1"/><rect x="300" y="372" width="1" height="1"/><rect x="300" y="365" width="1" height="1"/><rect x="301" y="359" width="1" height="1"/><rect x="302" y="362" width="1" height="1"/><rect x="302" y="376" width="1" height="1"/><rect x="303" y="350" width="1" height="1"/><rect x="303" y="364" width="1" height="1"/><rect x="304" y="358" width="1" height="1"/><rect x="305" y="357" width="1" height="1"/><rect x="306" y="373" width="1" height="1"/><rect x="307" y="363" width="1" height="1"/><rect x="307" y="359" width="1" height="1"/><rect x="308" y="365" width="1" height="1"/><rect x="309" y="347" width="1" height="1"/><rect x="309" y="371" width="1" height="1"/><rect x="310" y="342" width="1" height="1"/><rect x="311" y="356" width="1" height="1"/><rect x="312" y="360" width="1" height="1"/><rect x="313" y="347" width="1" height="1"/><rect x="313" y="369" width="1" height="1"/><rect x="314" y="356" width="1" height="1"/><rect x="314" y="345" width="1" height="1"/><rect x="315" y="349" width="1" height="1"/><rect x="315" y="359" width="1" height="1"/><rect x="316" y="361" width="1" height="1"/><rect x="316" y="340" width="1" height="1"/><rect x="317" y="361" width="1" height="1"/><rect x="318" y="368" width="1" height="1"/><rect x="318" y="377" width="1" height="1"/><rect x="319" y="347" width="1" height="1"/><rect x="319" y="342" width="1" height="1"/><rect x="320" y="376" width="1" height="1"/><rect x="320" y="379" width="1" height="1"/><rect x="321" y="364" width="1" height="1"/><rect x="322" y="379" width="1" height="1"/><rect x="322" y="362" width="1" height="1"/><rect x="323" y="361" width="1" height="1"/><rect x="323" y="345" width="1" height="1"/><rect x="324" y="343" width="1" height="1"/><rect x="325" y="377" width="1" height="1"/><rect x="325" y="357" width="1" height="1"/><rect x="326" y="373" width="1" height="1"/><rect x="327" y="370" width="1" height="1"/><rect x="327" y="359" width="1" height="1"/><rect x="328" y="347" width="1" height="1"/><rect x="328" y="343" width="1" height="1"/><rect x="329" y="348" width="1" height="1"/><rect x="329" y="367" width="1" height="1"/><rect x="330" y="342" width="1" height="1"/><rect x="330" y="362" width="1" height="1"/><rect x="331" y="350" width="1" height="1"/><rect x="332" y="369" width="1" height="1"/><rect x="332" y="352" width="1" height="1"/><rect x="333" y="364" width="1" height="1"/><rect x="334" y="340" width="1" height="1"/><rect x="334" y="352" width="1" height="1"/><rect x="335" y="355" width="1" height="1"/><rect x="336" y="373" width="1" height="1"/><rect x="336" y="344" width="1" height="1"/><rect x="337" y="376" width="1" height="1"/><rect x="337" y="379" width="1" height="1"/><rect x="338" y="356" width="1" height="1"/><rect x="338" y="349" width="1" height="1"/><rect x="339" y="352" width="1" height="1"/><rect x="339" y="378" width="1" height="1"/><rect x="340" y="375" width="1" height="1"/><rect x="340" y="368" width="1" height="1"/><rect x="341" y="354" width="1" height="1"/><rect x="341" y="343" width="1" height="1"/><rect x="342" y="352" width="1" height="1"/><rect x="342" y="376" width="1" height="1"/><rect x="343" y="343" width="1" height="1"/><rect x="343" y="370" width="1" height="1"/><rect x="344" y="340" width="1" height="1"/><rect x="345" y="353" width="1" height="1"/><rect x="345" y="363" width="1" height="1"/><rect x="346" y="353" width="1" height="1"/><rect x="347" y="361" width="1" height="1"/><rect x="347" y="371" width="1" height="1"/><rect x="348" y="365" width="1" height="1"/><rect x="348" y="375" width="1" height="1"/><rect x="349" y="346" width="1" height="1"/><rect x="349" y="348" width="1" height="1"/><rect x="350" y="337" width="1" height="1"/><rect x="350" y="355" width="1" height="1"/><rect x="351" y="367" width="1" height="1"/><rect x="351" y="361" width="1" height="1"/><rect x="352" y="368" width="1" height="1"/><rect x="353" y="367" width="1" height="1"/><rect x="353" y="359" width="1" height="1"/><rect x="354" y="377" width="1" height="1"/><rect x="354" y="344" width="1" height="1"/><rect x="355" y="371" width="1" height="1"/><rect x="355" y="340" width="1" height="1"/><rect x="356" y="337" width="1" height="1"/><rect x="357" y="358" width="1" height="1"/><rect x="358" y="373" width="1" height="1"/><rect x="359" y="341" width="1" height="1"/><rect x="360" y="348" width="1" height="1"/><rect x="360" y="353" width="1" height="1"/><rect x="361" y="372" width="1" height="1"/><rect x="361" y="360" width="1" height="1"/><rect x="362" y="371" width="1" height="1"/><rect x="363" y="353" width="1" height="1"/><rect x="364" y="352" width="1" height="1"/><rect x="365" y="348" width="1" height="1"/><rect x="366" y="377" width="1" height="1"/><rect x="366" y="372" width="1" height="1"/><rect x="367" y="357" width="1" height="1"/><rect x="368" y="350" width="1" height="1"/><rect x="369" y="358" width="1" height="1"/><rect x="370" y="357" width="1" height="1"/><rect x="370" y="341" width="1" height="1"/><rect x="371" y="368" width="1" height="1"/><rect x="372" y="354" width="1" height="1"/><rect x="373" y="364" width="1" height="1"/><rect x="374" y="374" width="1" height="1"/><rect x="374" y="351" width="1" height="1"/><rect x="375" y="347" width="1" height="1"/><rect x="376" y="360" width="1" height="1"/><rect x="377" y="346" width="1" height="1"/><rect x="378" y="341" width="1" height="1"/><rect x="379" y="347" width="1" height="1"/><rect x="379" y="347" width="1" height="1"/><rect x="380" y="358" width="1" height="1"/><rect x="380" y="359" width="1" height="1"/><rect x="381" y="364" width="1" height="1"/><rect x="382" y="360" width="1" height="1"/><rect x="383" y="345" width="1" height="1"/><rect x="384" y="351" width="1" height="1"/><rect x="384" y="335" width="1" height="1"/><rect x="385" y="351" width="1" height="1"/><rect x="386" y="376" width="1" height="1"/><rect x="387" y="339" width="1" height="1"/><rect x="388" y="337" width="1" height="1"/><rect x="389" y="365" width="1" height="1"/><rect x="390" y="374" width="1" height="1"/><rect x="390" y="344" width="1" height="1"/><rect x="391" y="365" width="1" height="1"/><rect x="392" y="365" width="1" height="1"/><rect x="393" y="360" width="1" height="1"/><rect x="394" y="355" width="1" height="1"/><rect x="395" y="356" width="1" height="1"/><rect x="395" y="354" width="1" height="1"/><rect x="396" y="354" width="1" height="1"/><rect x="397" y="364" width="1" height="1"/><rect x="398" y="357" width="1" height="1"/><rect x="399" y="366" width="1" height="1"/><rect x="400" y="352" width="1" height="1"/><rect x="401" y="340" width="1" height="1"/><rect x="402" y="337" width="1" height="1"/><rect x="403" y="368" width="1" height="1"/><rect x="404" y="347" width="1" height="1"/><rect x="405" y="335" width="1" height="1"/><rect x="406" y="371" width="1" height="1"/><rect x="407" y="374" width="1" height="1"/><rect x="408" y="361" width="1" height="1"/><rect x="409" y="358" width="1" height="1"/><rect x="410" y="358" width="1" height="1"/><rect x="411" y="350" width="1" height="1"/><rect x="412" y="369" width="1" height="1"/><rect x="413" y="351" width="1" height="1"/><rect x="414" y="351" width="1" height="1"/><rect x="415" y="346" width="1" height="1"/><rect x="417" y="337" width="1" height="1"/><rect x="418" y="370" width="1" height="1"/><rect x="419" y="339" width="1" height="1"/><rect x="420" y="353" width="1" height="1"/><rect x="421" y="358" width="1" height="1"/><rect x="422" y="373" width="1" height="1"/><rect x="423" y="349" width="1" height="1"/><rect x="424" y="361" width="1" height="1"/><rect x="425" y="367" width="1" height="1"/><rect x="426" y="347" width="1" height="1"/><rect x="427" y="359" width="1" height="1"/><rect x="428" y="352" width="1" height="1"/><rect x="429" y="363" width="1" height="1"/><rect x="430" y="339" width="1" height="1"/><rect x="431" y="361" width="1" height="1"/><rect x="432" y="363" width="1" height="1"/><rect x="433" y="343" width="1" height="1"/><rect x="434" y="368" width="1" height="1"/><rect x="435" y="350" width="1" height="1"/><rect x="436" y="368" width="1" height="1"/><rect x="437" y="353" width="1" height="1"/><rect x="438" y="369" width="1" height="1"/><rect x="440" y="354" width="1" height="1"/><rect x="441" y="361" width="1" height="1"/><rect x="442" y="360" width="1" height="1"/><rect x="443" y="367" width="1" height="1"/><rect x="444" y="340" width="1" height="1"/><rect x="445" y="370" width="1" height="1"/><rect x="464" y="357" width="1" height="1"/><rect x="469" y="348" width="1" height="1"/><rect x="467" y="362" width="1" height="1"/><rect x="470" y="355" width="1" height="1"/><rect x="471" y="365" width="1" height="1"/><rect x="450" y="348" width="1" height="1"/><rect x="276" y="320" width="1" height="1"/><rect x="239" y="327" width="1" height="1"/><rect x="258" y="332" width="1" height="1"/><rect x="205" y="333" width="1" height="1"/><rect x="283" y="333" width="1" height="1"/></g>
 </g>
 <path d="M54.2,199.7 L58.3,200.3 L60.3,201.7 L61.3,215.0 L62.5,253.3 L63.3,215.0 L64.2,201.7 L65.8,197.5 L68.3,197.0 L70.8,199.2 L73.0,200.3 L75.0,215.0 L76.7,210.8 L80.0,208.3 L83.3,197.5 L86.7,200.0 L90.0,199.2 L93.3,198.0 L96.2,199.7 L99.2,199.2 L103.3,210.8 L106.7,205.3 L110.0,207.0 L113.3,206.7 L116.7,204.7 L118.3,206.3 L120.8,204.7 L123.3,210.0 L126.3,216.7 L128.3,205.8 L130.0,213.3 L133.3,206.3 L136.7,206.7 L140.8,209.7 L145.0,210.0 L148.3,209.2 L150.8,210.8 L155.0,208.3 L160.0,209.2 L165.0,209.7 L168.3,213.3 L171.7,213.7 L175.0,214.8 L178.4,212.7 L181.7,213.3 L185.0,214.2 L188.3,212.5 L191.7,214.2 L195.0,217.0 L198.3,216.7 L201.7,215.0 L204.2,217.0 L208.3,216.3 L212.5,216.7 L214.2,220.0 L217.1,221.5 L220.0,220.8 L224.2,221.7 L229.2,219.7 L231.3,227.0 L233.3,220.8 L238.3,219.7 L241.7,221.6 L245.0,221.3 L248.3,224.2 L250.3,228.0 L252.5,224.7 L255.6,226.0 L258.6,224.5 L261.7,225.0 L265.0,223.7 L267.5,227.0 L271.7,228.0 L275.0,229.1 L278.4,227.2 L281.7,227.7 L286.7,226.3 L288.3,231.7 L293.3,230.8 L296.3,232.2 L299.3,230.4 L302.3,231.8 L305.3,230.4 L308.3,230.8 L311.6,233.9 L315.0,234.2 L320.0,232.5 L323.3,237.5 L326.6,238.4 L330.0,236.7 L332.8,237.5 L335.6,235.9 L338.4,238.2 L341.1,236.1 L343.9,237.9 L346.7,236.7 L348.3,242.0 L351.7,240.8 L354.7,241.7 L357.7,240.4 L360.7,242.0 L363.7,240.4 L366.7,240.8 L370.0,242.0 L373.4,240.9 L376.7,241.7 L379.2,246.7 L383.3,247.5 L386.6,247.6 L390.0,246.3 L394.9,249.3 L399.7,249.7 L403.2,247.9 L406.7,249.3 L408.8,254.2 L412.2,255.8 L415.0,254.9 L419.2,254.2 L421.9,254.9 L424.0,253.5 L425.8,260.4 L428.2,254.9 L431.7,257.6 L434.4,260.3 L437.2,260.8 L441.4,259.0 L444.2,261.3 L447.0,261.4 L450.4,263.2 L453.9,262.2 L458.0,266.0 L461.3,267.3 L464.5,265.6 L467.8,266.4 L470.6,269.2 L475.4,269.4 L479.6,272.2" stroke="#45a0da" stroke-width="1" fill="none" shape-rendering="crispEdges"/>
</svg>
<div class="t lbl" style="left:54px;top:118.6px">MB/sec</div>
<div class="t lbl" style="left:440px;top:118.6px;width:39px;text-align:right;letter-spacing:0.5px">ms</div>
<div class="t lbl" style="left:10px;top:126.6px;width:39px;text-align:right">150</div>
<div class="t lbl" style="left:10px;top:221.4px;width:39px;text-align:right">100</div>
<div class="t lbl" style="left:10px;top:315px;width:39px;text-align:right">50</div>
<div class="t lbl" style="left:484.3px;top:127.1px">45</div>
<div class="t lbl" style="left:484px;top:221.4px">30</div>
<div class="t lbl" style="left:484px;top:315px">15</div>
<div class="t lbl" style="left:34px;top:416.3px;width:40px;text-align:center">0</div>
<div class="t lbl" style="left:76px;top:416.3px;width:40px;text-align:center">10</div>
<div class="t lbl" style="left:119px;top:416.3px;width:40px;text-align:center">20</div>
<div class="t lbl" style="left:161px;top:416.3px;width:40px;text-align:center">30</div>
<div class="t lbl" style="left:204px;top:416.3px;width:40px;text-align:center">40</div>
<div class="t lbl" style="left:246px;top:416.3px;width:40px;text-align:center">50</div>
<div class="t lbl" style="left:289px;top:416.3px;width:40px;text-align:center">60</div>
<div class="t lbl" style="left:331px;top:416.3px;width:40px;text-align:center">70</div>
<div class="t lbl" style="left:374px;top:416.3px;width:40px;text-align:center">80</div>
<div class="t lbl" style="left:416px;top:416.3px;width:40px;text-align:center">90</div>
<div class="t lbl" style="left:464px;top:416.3px;font-size:11.5px;letter-spacing:0.1px">100%</div>

<!-- right panel -->
<div class="a" style="left:536px;top:112px;width:86px;height:21px;border:1px solid #2f8fc4;border-radius:3px;background:linear-gradient(180deg,#e6f5fc 0%,#dcf1fb 45%,#c6eafb 55%,#b4e2f8 100%);box-shadow:inset 0 0 0 1px #6fcdf3,inset 0 0 0 2px #b8e6f8"></div>
<div class="t" style="left:535px;top:116.8px;width:86px;text-align:center;font-size:12px;letter-spacing:0.6px">Start</div>

<div class="a" style="left:515px;top:154px;width:129px;height:127px;border:1px solid #d5dfe5;border-radius:3px"></div>
<div class="a" style="left:520px;top:150px;width:83px;height:10px;background:#fff"></div>
<div class="t lbl" style="left:523px;top:148.1px;letter-spacing:0.3px">Transfer Rate</div>
<div class="t lbl" style="left:523px;top:165.2px">Minimum</div>
<div class="a vb" style="top:182px"></div>
<div class="vt" style="top:183.08px;color:#3fa8e8">75.2 MB/sec</div>
<div class="t lbl" style="left:523px;top:200.5px">Maximum</div>
<div class="a vb" style="top:218px"></div>
<div class="vt" style="top:219.08px;color:#3fa8e8">115.1 MB/sec</div>
<div class="t lbl" style="left:523px;top:236.6px">Average:</div>
<div class="a vb" style="top:254px"></div>
<div class="vt" style="top:255.08px;color:#3fa8e8">98.3 MB/sec</div>

<div class="t lbl" style="left:523px;top:290.8px;letter-spacing:0.35px">Access Time:</div>
<div class="a vb" style="top:307px"></div>
<div class="vt" style="top:308.08px;color:#f4f07a">6.9 ms</div>
<div class="t lbl" style="left:523px;top:338.8px;letter-spacing:0.4px">Burst</div>
<div class="a vb" style="top:356px"></div>
<div class="vt" style="top:357.08px;color:#fff">186.3 MB/sec</div>
<div class="t lbl" style="left:523px;top:385.5px;letter-spacing:-0.15px">CPU Usage</div>
<div class="a vb" style="top:403px"></div>
<div class="vt" style="top:402.78px;color:#fff;letter-spacing:0.2px">1.9%</div>
</body></html>
